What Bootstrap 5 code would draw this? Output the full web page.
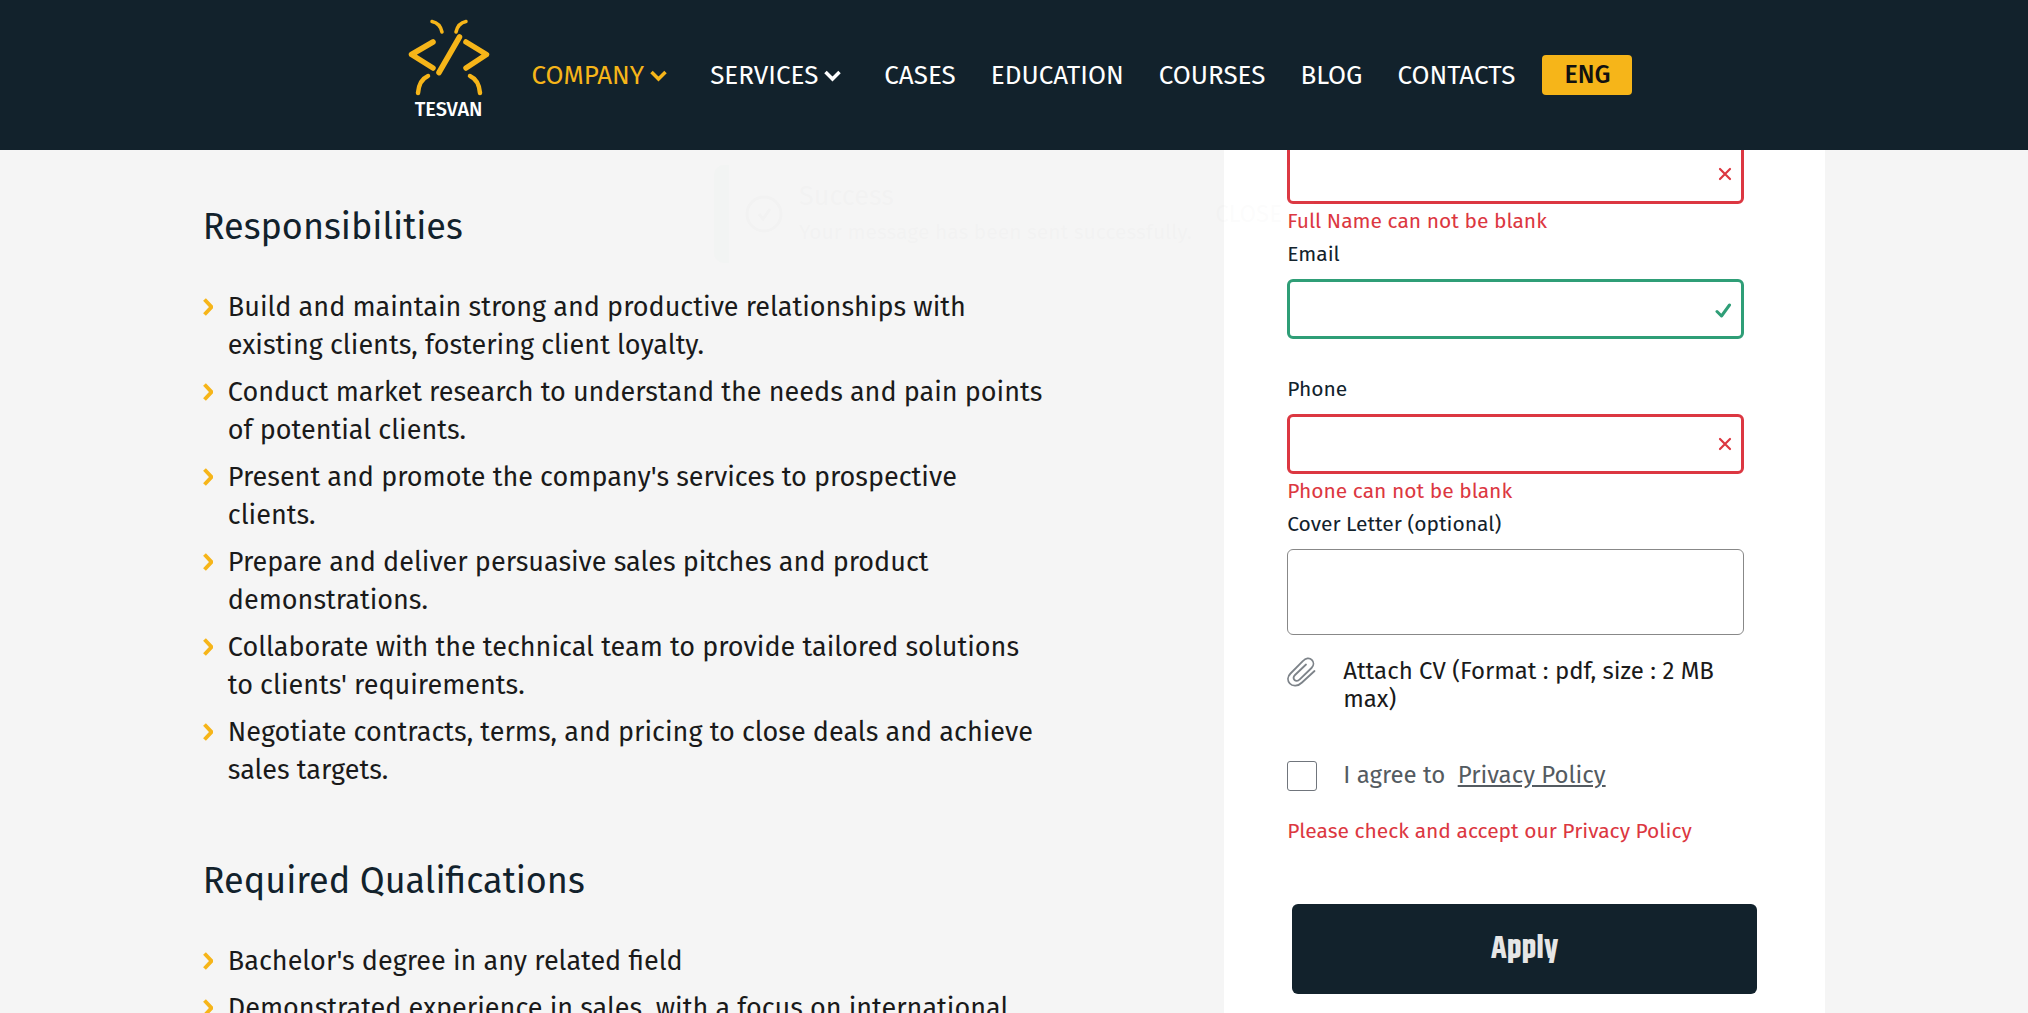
<!DOCTYPE html>
<html lang="en">
<head>
<meta charset="utf-8">
<meta name="viewport" content="width=device-width, initial-scale=1">
<title>Tesvan – Careers</title>
<link href="https://cdn.jsdelivr.net/npm/bootstrap@5.3.0/dist/css/bootstrap.min.css" rel="stylesheet">
<style>
  :root { --navy: #12222c; --amber: #f6b519; --danger: #dc3741; --ok: #2f9e77; }
  body { font-family: "Fira Sans", "Noto Sans", sans-serif; background: #f5f5f5; color: #1a1a1a; height: 100vh; overflow: hidden; }

  .site-header { background: var(--navy); height: 150px; z-index: 10; padding-left: 12px; }
  .site-header .nav-link { color: #fff; font-size: 26px; line-height: 32px; padding: 2px 0 0; }
  .site-header .nav-link.active { color: var(--amber); }
  .site-header .has-menu { margin-right: 8px; gap: 6px; }
  .brand-link { margin-right: 42px; padding-top: 18px; }
  .brand-name { font-size: 20px; line-height: 24px; font-weight: 500; color: #fff; }
  .main-menu { gap: 35px; }
  .lang-btn { background: var(--amber); color: #111; font-size: 25px; line-height: 40px; font-weight: 500; border: 0; border-radius: 4px; padding: 0; width: 90px; margin-left: -8px; }

  .page-wrap { width: 80%; min-height: 100vh; margin: 0 auto; }
  .job-text { max-width: 843px; padding-top: 201px; }
  .job-text h2 { font-size: 36px; line-height: 52px; color: var(--navy); margin: 0 0 35px; font-weight: 400; }
  .job-list { font-size: 27px; line-height: 38px; gap: 9px; margin-bottom: 66px; }
  .job-list li { gap: 15px; }
  .job-list svg { margin-top: 10px; }

  .apply-card { width: 601px; padding: 105px 81px 19px 63px; font-size: 21px; line-height: 28px; }
  .apply-card .caption { color: var(--navy); margin-bottom: 11px; }
  .apply-card .form-control { border-radius: 6px; background-image: none; }
  .field-box .form-control { height: 60px; border: 3px solid #888; }
  .field-box .form-control.is-invalid { border-color: var(--danger); }
  .field-box .form-control.is-valid { border-color: var(--ok); }
  .field-box svg { right: 12px; top: 23px; }
  .error-text { color: var(--danger); }
  .field-error { height: 36px; padding-top: 3px; }
  .apply-card .letter-box { height: 86px; border: 1px solid #888; resize: none; margin-bottom: 22px; }
  .form-option { font-size: 24px; line-height: 28px; gap: 26px; }
  .attach-row { margin-bottom: 48px; }
  .tick-box { width: 30px; height: 30px; border: 1px solid #70757c; margin: 0; }
  .apply-card .tick-box { border-radius: 3px; }
  .agree-row { margin-bottom: 26px; }
  .agree-row, .agree-row a { color: #545b61; }
  .agree-row a { margin-left: 6px; }
  .apply-btn { height: 90px; background: var(--navy); color: #e6e6e6; border: 0; border-radius: 6px; font: bold 32px/40px "Khand", "Liberation Sans Narrow", "DejaVu Sans Condensed", sans-serif; margin: 59px -13px 0 5px; }

  .toast-note { top: 165px; left: 50%; width: 600px; height: 98px; margin-left: -300px; background: #fff; border-radius: 10px; opacity: .013; z-index: 5; color: #000; overflow: hidden; pointer-events: none; font-size: 21px; line-height: 36px; }
  .toast-note .stripe { width: 15px; background: #14805e; }
  .toast-note .toast-title { font-size: 27px; }
  .toast-note .toast-close { margin-right: 32px; font-size: 24px; }
</style>
</head>
<body>
<header class="site-header fixed-top">
  <nav class="d-flex align-items-center justify-content-center h-100" aria-label="Main">
    <a href="#" class="brand-link d-flex flex-column align-items-center align-self-start text-decoration-none">
      <svg width="82" height="79" viewBox="406 18 82 79" fill="none" stroke="#f6b519" stroke-linecap="round" stroke-linejoin="round" aria-hidden="true">
        <path d="M430 21.500Q438 23 440 32M464 21.500Q456 23 454 32" stroke-width="3.500"/>
        <path d="M431 42L409.500 54.500L431 68M464 42L484.500 54.500L464 68M457.500 37L437 72.500" stroke-width="5.500"/>
        <path d="M426 76Q417 80 416 93M468 76Q477 80 478 93" stroke-width="4.500"/>
      </svg>
      <span class="brand-name">TESVAN</span>
    </a>
    <div class="main-menu d-flex align-items-center">
      <a class="nav-link active has-menu d-flex align-items-center" href="#">COMPANY
        <svg width="17" height="12" viewBox="0 0 17 12" fill="none" stroke="currentColor" stroke-width="3.500" aria-hidden="true"><path d="M1.500 2L8.500 9L15.500 2"/></svg></a>
      <a class="nav-link has-menu d-flex align-items-center" href="#">SERVICES
        <svg width="17" height="12" viewBox="0 0 17 12" fill="none" stroke="currentColor" stroke-width="3.500" aria-hidden="true"><path d="M1.500 2L8.500 9L15.500 2"/></svg></a>
      <a class="nav-link" href="#">CASES</a>
      <a class="nav-link" href="#">EDUCATION</a>
      <a class="nav-link" href="#">COURSES</a>
      <a class="nav-link" href="#">BLOG</a>
      <a class="nav-link" href="#">CONTACTS</a>
      <button type="button" class="lang-btn">ENG</button>
    </div>
  </nav>
</header>

<div class="toast-note position-fixed d-flex align-items-center" role="status">
  <span class="stripe align-self-stretch"></span>
  <svg class="mx-3" width="38" height="38" viewBox="0 0 38 38" fill="none" stroke="#000" stroke-width="3" aria-hidden="true"><circle cx="19" cy="19" r="17"/><path d="M14 19l4 5 7-10"/></svg>
  <div class="flex-grow-1"><div class="toast-title">Success</div><div>Your message has been sent successfully.</div></div>
  <span class="toast-close">CLOSE</span>
</div>

<svg class="d-none" aria-hidden="true">
  <symbol id="chevron" viewBox="0 0 10 18"><path d="M1.500 1.500L8.500 9L1.500 16.500" fill="none" stroke="#f6b519" stroke-width="3.800"/></symbol>
  <symbol id="cross" viewBox="0 0 14 14"><path d="M2 2L12 12M12 2L2 12" fill="none" stroke="#dc3741" stroke-width="2.200" stroke-linecap="round"/></symbol>
</svg>

<div class="page-wrap d-flex justify-content-between">
  <main class="job-text">
    <h2>Responsibilities</h2>
    <ul class="job-list list-unstyled d-flex flex-column">
      <li class="d-flex"><svg class="flex-shrink-0" width="10" height="18"><use href="#chevron"/></svg><span>Build and maintain strong and productive relationships with existing clients, fostering client loyalty.</span></li>
      <li class="d-flex"><svg class="flex-shrink-0" width="10" height="18"><use href="#chevron"/></svg><span>Conduct market research to understand the needs and pain points of potential clients.</span></li>
      <li class="d-flex"><svg class="flex-shrink-0" width="10" height="18"><use href="#chevron"/></svg><span>Present and promote the company's services to prospective clients.</span></li>
      <li class="d-flex"><svg class="flex-shrink-0" width="10" height="18"><use href="#chevron"/></svg><span>Prepare and deliver persuasive sales pitches and product demonstrations.</span></li>
      <li class="d-flex"><svg class="flex-shrink-0" width="10" height="18"><use href="#chevron"/></svg><span>Collaborate with the technical team to provide tailored solutions to clients' requirements.</span></li>
      <li class="d-flex"><svg class="flex-shrink-0" width="10" height="18"><use href="#chevron"/></svg><span>Negotiate contracts, terms, and pricing to close deals and achieve sales targets.</span></li>
    </ul>
    <h2>Required Qualifications</h2>
    <ul class="job-list list-unstyled d-flex flex-column">
      <li class="d-flex"><svg class="flex-shrink-0" width="10" height="18"><use href="#chevron"/></svg><span>Bachelor's degree in any related field</span></li>
      <li class="d-flex"><svg class="flex-shrink-0" width="10" height="18"><use href="#chevron"/></svg><span>Demonstrated experience in sales, with a focus on international</span></li>
    </ul>
  </main>

  <aside class="apply-card bg-white flex-shrink-0">
    <form class="d-flex flex-column" novalidate>
      <label class="caption" for="fullName">Full Name</label>
      <div class="field-box position-relative">
        <input id="fullName" type="text" class="form-control is-invalid">
        <svg class="position-absolute" width="14" height="14" aria-hidden="true"><use href="#cross"/></svg>
      </div>
      <div class="field-error error-text">Full Name can not be blank</div>

      <label class="caption" for="email">Email</label>
      <div class="field-box position-relative">
        <input id="email" type="email" class="form-control is-valid">
        <svg class="position-absolute" width="18" height="16" viewBox="0 0 18 16" fill="none" stroke="#2f9e77" stroke-width="3" stroke-linecap="round" stroke-linejoin="round" aria-hidden="true"><path d="M3 9.500L7.500 14L15.500 3"/></svg>
      </div>
      <div class="field-error error-text"></div>

      <label class="caption" for="phone">Phone</label>
      <div class="field-box position-relative">
        <input id="phone" type="tel" class="form-control is-invalid">
        <svg class="position-absolute" width="14" height="14" aria-hidden="true"><use href="#cross"/></svg>
      </div>
      <div class="field-error error-text">Phone can not be blank</div>

      <label class="caption" for="letter">Cover Letter (optional)</label>
      <textarea id="letter" class="form-control letter-box"></textarea>

      <label class="form-option attach-row d-flex align-items-start" for="cv">
        <svg class="flex-shrink-0" width="30" height="30" viewBox="0 0 30 30" fill="none" stroke="#7d8389" stroke-width="1.800" stroke-linecap="round" aria-hidden="true"><path d="M27.500 14L15 25.500C11 29.500 5.500 29.500 2.800 26.500C.2 23.500.5 19.500 3.500 16.500L16 4C18.500 1 22.500.5 24.800 2.800C27 5 27 8.500 24.500 11L12.500 22.500C11 24.200 8.800 24.200 7.500 23C6.200 21.500 6.300 19.700 8 18L19 7.500"/></svg>
        <span>Attach CV (Format : pdf, size : 2 MB max)</span>
        <input id="cv" type="file" accept=".pdf" class="visually-hidden">
      </label>

      <div class="form-option agree-row d-flex align-items-start">
        <input id="agree" type="checkbox" class="form-check-input tick-box flex-shrink-0">
        <span><label for="agree">I agree to</label> <a href="#">Privacy Policy</a></span>
      </div>
      <div class="error-text">Please check and accept our Privacy Policy</div>

      <button type="submit" class="apply-btn">Apply</button>
    </form>
  </aside>
</div>
<script src="https://cdn.jsdelivr.net/npm/bootstrap@5.3.0/dist/js/bootstrap.bundle.min.js"></script>
</body>
</html>
